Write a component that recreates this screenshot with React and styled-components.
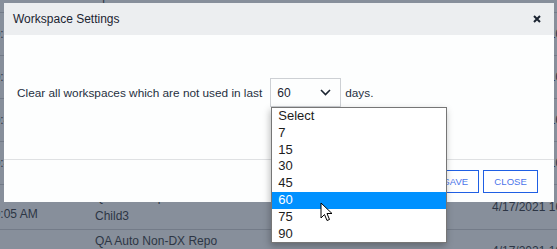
import React from 'react';
import styled, { createGlobalStyle } from 'styled-components';

const GlobalStyle = createGlobalStyle`
  html, body {
    margin: 0;
    padding: 0;
    overflow: hidden;
    font-family: "Liberation Sans", Arial, sans-serif;
  }
`;

const Page = styled.div`
  position: relative;
  width: 557px;
  height: 249px;
  overflow: hidden;
  background: #878f9b;
`;

const Table = styled.div`
  margin-top: -20px;
  margin-left: -13px;
  color: #2d3645;
  font-size: 12px;
`;

const Row = styled.div`
  display: flex;
  align-items: center;
  height: ${p => p.$height}px;
  border-bottom: 1px solid #737b88;
  box-sizing: border-box;
`;

const Cell = styled.div`
  width: ${p => (p.$width ? `${p.$width}px` : 'auto')};
  flex: ${p => (p.$width ? 'none' : '1')};
  padding-left: ${p => p.$pad || 0}px;
  box-sizing: border-box;
  white-space: nowrap;
  line-height: ${p => p.$lh || 15}px;
`;

const Modal = styled.div`
  position: absolute;
  left: 4px;
  top: 3px;
  width: 550px;
  height: 199px;
  display: flex;
  flex-direction: column;
  background: #fdfefe;
`;

const Header = styled.div`
  display: flex;
  align-items: center;
  justify-content: space-between;
  height: 32px;
  padding: 0 13px 0 9px;
  background: #eceef0;
`;

const Title = styled.div`
  font-size: 12px;
  color: #1b2431;
`;

const CloseIcon = styled.svg`
  width: 8px;
  height: 8px;
  display: block;
`;

const Body = styled.div`
  flex: 1;
  display: flex;
  align-items: flex-start;
  padding: 43px 0 0 13px;
  font-size: 11.8px;
  color: #263041;
`;

const Line = styled.div`
  display: flex;
  align-items: center;
  height: 29px;
`;

const SelectWrap = styled.div`
  position: relative;
  margin: 0 4px 0 8px;
`;

const SelectBox = styled.div`
  width: 71px;
  height: 29px;
  box-sizing: border-box;
  border: 1px solid #cdd0d4;
  display: flex;
  align-items: center;
  justify-content: space-between;
  padding: 0 9px 0 6px;
  font-size: 12px;
  color: #1b2431;
`;

const Chevron = styled.svg`
  width: 11px;
  height: 7px;
  display: block;
`;

const Listbox = styled.ul`
  position: absolute;
  left: 1px;
  top: 29px;
  width: 174px;
  margin: 0;
  padding: 0;
  list-style: none;
  background: #fff;
  border: 1px solid #767676;
  box-shadow: -1px 3px 7px rgba(0, 0, 0, 0.28);
  z-index: 2;
`;

const Option = styled.li`
  height: 16.8px;
  line-height: 16.8px;
  padding-left: 6px;
  font-size: 13px;
  color: ${p => (p.$active ? '#fff' : '#1d1d1d')};
  background: ${p => (p.$active ? '#0091ff' : 'transparent')};
`;

const Footer = styled.div`
  height: 43px;
  border-top: 1px solid #dfe1e3;
  box-sizing: border-box;
  display: flex;
  align-items: center;
  justify-content: flex-end;
  gap: 4px;
  padding-right: 16px;
`;

const Button = styled.button`
  height: 23px;
  padding: 0 10px;
  background: #fff;
  border: 1.5px solid #1f5fe4;
  color: #4a74ea;
  font-family: inherit;
  font-size: 9.5px;
  letter-spacing: 0.1px;
  text-transform: uppercase;
`;

const Cursor = styled.svg`
  position: absolute;
  left: 320px;
  top: 202px;
  width: 13px;
  height: 20px;
  z-index: 3;
`;

const rows = [
  { h: 43, c1: ['', '10:15 AM'], c2: ['Repo One', 'main'], c3: 'Ready', c4: '4/17/2021 10:21 AM' },
  { h: 43, c1: ['', '10:13 AM'], c2: ['Repo Two', 'develop'], c3: 'Ready', c4: '4/17/2021 10:18 AM' },
  { h: 43, c1: ['', '10:45 AM'], c2: ['Repo Three', 'Child1'], c3: 'Ready', c4: '4/17/2021 10:14 AM' },
  { h: 43, c1: ['', '10:44 AM'], c2: ['Repo Four', 'Child2'], c3: 'Ready', c4: '4/17/2021 10:09 AM' },
  { h: 45, c1: ['\u00a0', '10:05 AM'], c2: ['QA Auto Repo', 'Child3'], c3: 'Ready', c4: '4/17/2021 10:05 AM' },
  { h: 43, c1: ['', ''], c2: ['QA Auto Non-DX Repo', 'master'], c3: '', c4: '4/17/2021 10:02 AM' },
];

const options = ['Select', '7', '15', '30', '45', '60', '75', '90'];

const App = () => {
  return (
    <Page>
      <GlobalStyle />
      <Table>
        <Row $height={33}>
          <Cell $width={100} />
          <Cell $width={233}>Repo Branch</Cell>
          <Cell $width={157}>Status</Cell>
          <Cell>Last Used</Cell>
        </Row>
        {rows.map((r, i) => (
          <Row key={i} $height={r.h}>
            <Cell $width={100}>
              <div>{r.c1[0]}</div>
              <div>{r.c1[1]}</div>
            </Cell>
            <Cell $width={233} $pad={8} $lh={19}>
              <div>{r.c2[0]}</div>
              <div>{r.c2[1]}</div>
            </Cell>
            <Cell $width={157}>{r.c3}</Cell>
            <Cell $pad={15}>{r.c4}</Cell>
          </Row>
        ))}
      </Table>

      <Modal>
        <Header>
          <Title>Workspace Settings</Title>
          <CloseIcon viewBox="0 0 8 8">
            <path d="M1 1 L7 7 M7 1 L1 7" stroke="#1b2431" strokeWidth="2" />
          </CloseIcon>
        </Header>
        <Body>
          <Line>
            <span>Clear all workspaces which are not used in last</span>
            <SelectWrap>
              <SelectBox>
                <span>60</span>
                <Chevron viewBox="0 0 11 7">
                  <path d="M1 1 L5.5 5.5 L10 1" fill="none" stroke="#1b2431" strokeWidth="1.6" />
                </Chevron>
              </SelectBox>
              <Listbox>
                {options.map(o => (
                  <Option key={o} $active={o === '60'}>{o}</Option>
                ))}
              </Listbox>
            </SelectWrap>
            <span>days.</span>
          </Line>
        </Body>
        <Footer>
          <Button>Save</Button>
          <Button>Close</Button>
        </Footer>
      </Modal>

      <Cursor viewBox="0 0 13 20">
        <path
          d="M1 1 L1 16 L4.5 12.5 L7 18.5 L9.5 17.5 L7 11.5 L12 11.5 Z"
          fill="#fff"
          stroke="#000"
          strokeWidth="1"
          strokeLinejoin="round"
        />
      </Cursor>
    </Page>
  );
};

export default App;
